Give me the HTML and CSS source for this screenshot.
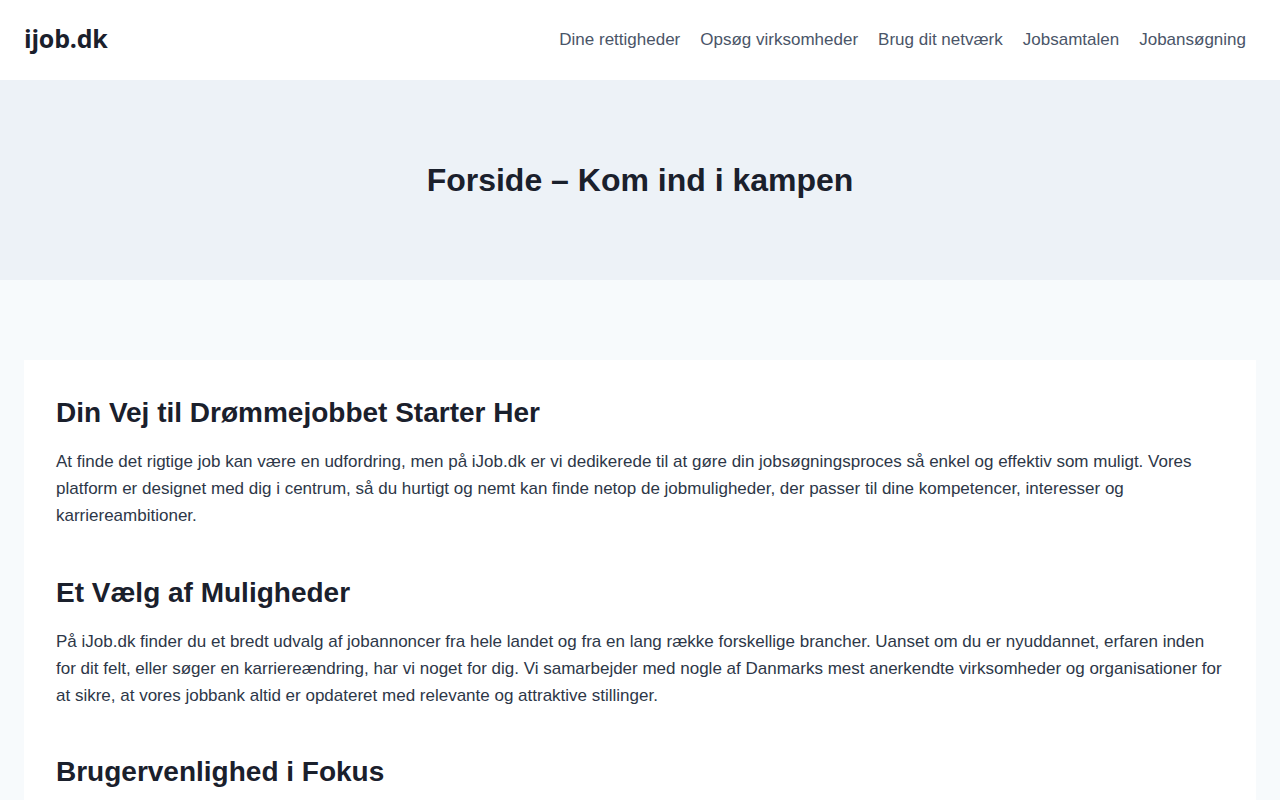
FILE: index.html
```html
<!DOCTYPE html>
<html lang="da">
<head>
<meta charset="utf-8">
<title>Forside – Kom ind i kampen – ijob.dk</title>
<link rel="stylesheet" href="styles.css">
</head>
<body>
<header class="site-header">
  <a class="logo" href="#">ijob.dk</a>
  <nav class="main-nav">
    <a href="#">Dine rettigheder</a>
    <a href="#">Opsøg virksomheder</a>
    <a href="#">Brug dit netværk</a>
    <a href="#">Jobsamtalen</a>
    <a href="#">Jobansøgning</a>
  </nav>
</header>
<section class="hero">
  <h1>Forside – Kom ind i kampen</h1>
</section>
<main class="main">
  <article class="card">
    <h2>Din Vej til Drømmejobbet Starter Her</h2>
    <p>At finde det rigtige job kan være en udfordring, men på iJob.dk er vi dedikerede til at gøre din jobsøgningsproces så enkel og effektiv som muligt. Vores platform er designet med dig i centrum, så du hurtigt og nemt kan finde netop de jobmuligheder, der passer til dine kompetencer, interesser og karriereambitioner.</p>
    <h2>Et Vælg af Muligheder</h2>
    <p>På iJob.dk finder du et bredt udvalg af jobannoncer fra hele landet og fra en lang række forskellige brancher. Uanset om du er nyuddannet, erfaren inden for dit felt, eller søger en karriereændring, har vi noget for dig. Vi samarbejder med nogle af Danmarks mest anerkendte virksomheder og organisationer for at sikre, at vores jobbank altid er opdateret med relevante og attraktive stillinger.</p>
    <h2>Brugervenlighed i Fokus</h2>
    <p>Vores hjemmeside er designet til at være intuitiv og let at navigere, så du kan bruge din tid på det, der betyder mest: at finde dit næste job.</p>
  </article>
</main>
</body>
</html>
```
FILE: styles.css
```css
* { box-sizing: border-box; }
html, body { margin: 0; padding: 0; }
body {
  font-family: "Liberation Sans", Arial, sans-serif;
  font-size: 17px;
  line-height: 1.6;
  color: #2d3748;
  background: #f7fafc;
}
a { text-decoration: none; }
.site-header {
  height: 80px;
  background: #ffffff;
  display: flex;
  align-items: center;
  justify-content: space-between;
  padding: 0 24px;
}
.logo {
  font-family: "Open Sans", "Noto Sans", sans-serif;
  font-weight: 700;
  font-size: 25px;
  line-height: 1.2;
  padding-bottom: 4px;
  color: #1a202c;
  letter-spacing: -0.2px;
}
.main-nav {
  display: flex;
  align-items: center;
}
.main-nav a {
  color: #4a5568;
  font-size: 17px;
  padding: 0 10px;
  line-height: 80px;
}
.hero {
  height: 200px;
  background: #edf2f7;
  display: flex;
  align-items: center;
  justify-content: center;
}
.hero h1 {
  margin: 0;
  font-size: 32px;
  line-height: 1.5;
  font-weight: 700;
  color: #1a202c;
}
.main {
  padding: 80px 24px 40px;
}
.card {
  background: #ffffff;
  padding: 32px;
}
.card h2 {
  font-size: 28px;
  line-height: 1.5;
  font-weight: 700;
  color: #1a202c;
  margin: 42.5px 0 14px;
}
.card h2:first-child { margin-top: 0; }
.card p {
  margin: 0 0 17px;
  line-height: 27px;
}
```
